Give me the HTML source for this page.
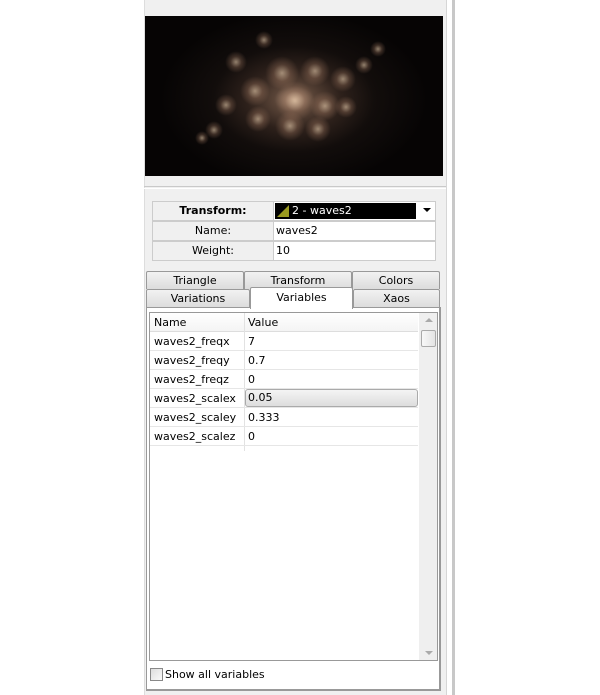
<!DOCTYPE html>
<html><head><style>
*{box-sizing:border-box;margin:0;padding:0}
body{width:600px;height:695px;background:#fff;position:relative;overflow:hidden;font-family:"DejaVu Sans","Liberation Sans",sans-serif;font-size:11px;color:#000}
.a{position:absolute}
.panel{left:144px;top:0;width:302px;height:695px;background:#f0f0f0;border-left:1px solid #ddd}
.img{left:145px;top:16px;width:298px;height:160px;background:
radial-gradient(ellipse 45% 55% at 50% 52%,rgba(230,190,160,.7) 0,rgba(170,130,105,.5) 15%,rgba(110,80,65,.38) 35%,rgba(60,45,38,.22) 60%,rgba(0,0,0,0) 100%),#060404;overflow:hidden}
.b{position:absolute;border-radius:50%;background:radial-gradient(circle,rgba(255,225,190,.55) 0,rgba(200,150,120,.25) 35%,rgba(0,0,0,0) 70%)}
.cell{position:absolute;border:1px solid #ccc;background:#fff;height:20px;line-height:18px}
.tab{position:absolute;height:18px;background:linear-gradient(#f2f2f2,#dcdcdc);border:1px solid #999;border-bottom:none;text-align:center;line-height:17px;border-radius:2px 2px 0 0}
.row{position:absolute;left:150px;width:268px;height:19px;border-bottom:1px solid #e6e6e6;line-height:19px}
.row span{position:absolute;left:4px}
.row i{font-style:normal;position:absolute;left:98px}
</style></head><body>
<div class="a panel"></div>
<div class="a" style="left:446px;top:0;width:1px;height:695px;background:#d6d6d6"></div>
<div class="a" style="left:452px;top:0;width:3px;height:695px;background:#c8c8c8"></div>
<div class="a" style="left:144px;top:186px;width:302px;height:1px;background:#c9c9c9"></div>
<div class="a" style="left:144px;top:188px;width:302px;height:1px;background:#fff"></div>
<div class="a img">
<div class="b" style="left:130px;top:65px;width:40px;height:40px"></div>
<div class="b" style="left:95px;top:60px;width:30px;height:30px"></div>
<div class="b" style="left:155px;top:40px;width:30px;height:30px"></div>
<div class="b" style="left:120px;top:40px;width:34px;height:34px"></div>
<div class="b" style="left:165px;top:75px;width:30px;height:30px"></div>
<div class="b" style="left:130px;top:95px;width:30px;height:30px"></div>
<div class="b" style="left:100px;top:90px;width:26px;height:26px"></div>
<div class="b" style="left:160px;top:100px;width:26px;height:26px"></div>
<div class="b" style="left:185px;top:50px;width:26px;height:26px"></div>
<div class="b" style="left:80px;top:35px;width:22px;height:22px"></div>
<div class="b" style="left:70px;top:78px;width:22px;height:22px"></div>
<div class="b" style="left:190px;top:80px;width:22px;height:22px"></div>
<div class="b" style="left:210px;top:40px;width:18px;height:18px"></div>
<div class="b" style="left:225px;top:25px;width:16px;height:16px"></div>
<div class="b" style="left:60px;top:105px;width:18px;height:18px"></div>
<div class="b" style="left:50px;top:115px;width:14px;height:14px"></div>
<div class="b" style="left:110px;top:15px;width:18px;height:18px"></div>
</div>
<div class="cell" style="left:152px;top:201px;width:122px;text-align:center;font-weight:bold;background:#f0f0f0">Transform:</div>
<div class="cell" style="left:273px;top:201px;width:163px;background:#fff"></div>
<div class="a" style="left:275px;top:203px;width:141px;height:16px;background:#000;color:#fff;line-height:15px;padding-left:17px">2 - waves2</div>
<svg class="a" style="left:277px;top:205px" width="12" height="12"><polygon points="0,12 12,0 12,12" fill="#9a9a20"/></svg>
<div class="a" style="left:423px;top:208px;width:0;height:0;border-left:4px solid transparent;border-right:4px solid transparent;border-top:4px solid #000"></div>
<div class="cell" style="left:152px;top:221px;width:122px;text-align:center;background:#f0f0f0">Name:</div>
<div class="cell" style="left:273px;top:221px;width:163px;padding-left:2px">waves2</div>
<div class="cell" style="left:152px;top:241px;width:122px;text-align:center;background:#f0f0f0">Weight:</div>
<div class="cell" style="left:273px;top:241px;width:163px;padding-left:2px">10</div>
<div class="tab" style="left:146px;top:271px;width:98px">Triangle</div>
<div class="tab" style="left:244px;top:271px;width:108px">Transform</div>
<div class="tab" style="left:352px;top:271px;width:88px">Colors</div>
<div class="tab" style="left:146px;top:289px;width:104px">Variations</div>
<div class="tab" style="left:353px;top:289px;width:87px">Xaos</div>
<div class="a" style="left:146px;top:307px;width:295px;height:384px;background:#fff;border:1px solid #999;border-right:2px solid #999;border-bottom:2px solid #999"></div>
<div class="tab" style="left:250px;top:287px;width:103px;height:22px;background:#fff;border-color:#999;line-height:19px">Variables</div>
<div class="a" style="left:149px;top:312px;width:289px;height:349px;border:1px solid #999;background:#fff"></div>
<div class="a" style="left:150px;top:313px;width:268px;height:19px;border-bottom:1px solid #ddd;background:linear-gradient(#fff,#f4f4f4)"></div>
<div class="a" style="left:244px;top:313px;width:1px;height:138px;background:#e2e2e2"></div>
<div class="a" style="left:154px;top:316px">Name</div>
<div class="a" style="left:248px;top:316px">Value</div>
<div class="row" style="top:332px"><span>waves2_freqx</span><i>7</i></div>
<div class="row" style="top:351px"><span>waves2_freqy</span><i>0.7</i></div>
<div class="row" style="top:370px"><span>waves2_freqz</span><i>0</i></div>
<div class="row" style="top:389px"><span>waves2_scalex</span><i>0.05</i></div>
<div class="a" style="left:245px;top:389px;width:173px;height:18px;border:1px solid #aaa;border-radius:3px;background:linear-gradient(#f4f4f4,#ddd)"></div>
<div class="a" style="left:248px;top:391px">0.05</div>
<div class="row" style="top:408px"><span>waves2_scaley</span><i>0.333</i></div>
<div class="row" style="top:427px"><span>waves2_scalez</span><i>0</i></div>
<div class="a" style="left:419px;top:313px;width:18px;height:347px;background:#efefef"></div>
<div class="a" style="left:425px;top:318px;border-left:4px solid transparent;border-right:4px solid transparent;border-bottom:4px solid #aaa"></div>
<div class="a" style="left:421px;top:330px;width:15px;height:17px;border:1px solid #aaa;border-radius:2px;background:linear-gradient(90deg,#f8f8f8,#e4e4e4)"></div>
<div class="a" style="left:425px;top:651px;border-left:4px solid transparent;border-right:4px solid transparent;border-top:4px solid #aaa"></div>
<div class="a" style="left:150px;top:668px;width:13px;height:13px;border:1px solid #888;background:linear-gradient(135deg,#ddd,#fafafa)"></div>
<div class="a" style="left:165px;top:668px">Show all variables</div>
</body></html>
